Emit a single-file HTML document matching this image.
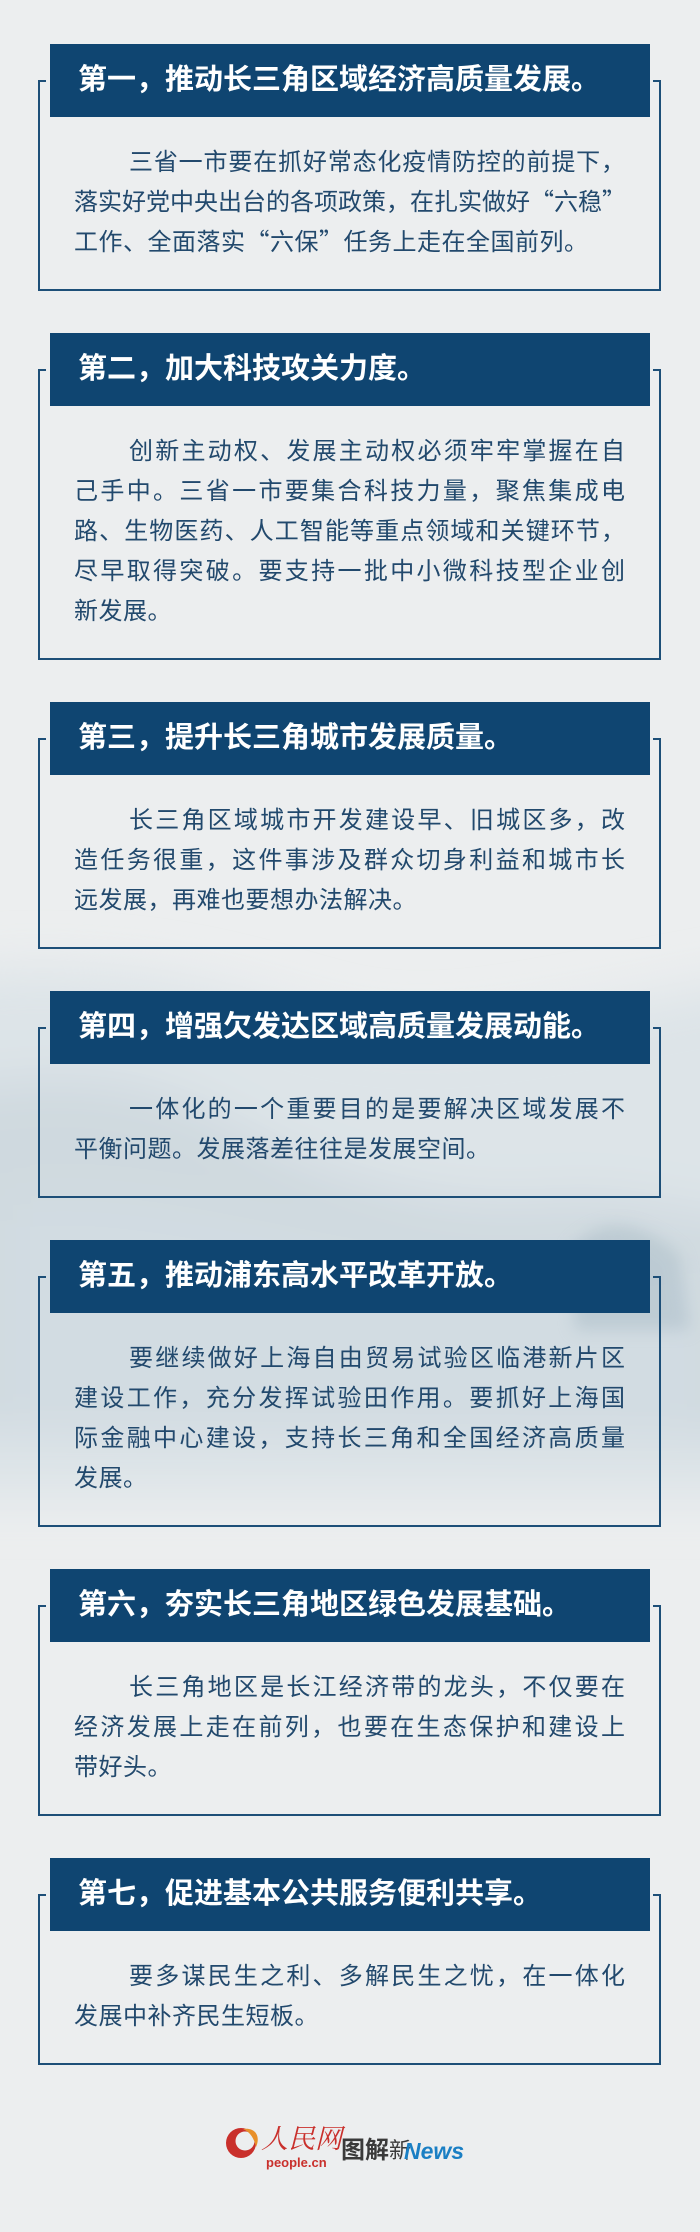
<!DOCTYPE html>
<html><head><meta charset="utf-8">
<style>
*{margin:0;padding:0;box-sizing:border-box}
html,body{width:700px;height:2232px;overflow:hidden}
body{position:relative;background:#eceeef;font-family:"Liberation Sans","Noto Sans CJK SC",sans-serif}
.bg{position:absolute;left:0;top:0;width:700px;height:2232px}
.box{position:absolute;left:38px;width:623px;border:2px solid #1d4f78;border-top:none}
.box:before,.box:after{content:"";position:absolute;top:0;width:8px;border-top:2px solid #1d4f78}
.box:before{left:-2px}.box:after{right:-2px}
.hd{position:absolute;left:50px;width:600px;height:73px;background:#0f4571;color:#fff;font-weight:bold;font-size:29px;line-height:73px;padding-left:28px;white-space:nowrap}
.tx{position:absolute;left:74px;width:551px;color:#22496d;font-size:24px;line-height:40px;font-family:"Noto Sans CJK SC",sans-serif}
.tx div{text-align:justify;text-align-last:justify;white-space:nowrap;height:40px}
.tx div.l{text-align-last:left;letter-spacing:0.5px}
.tx div.i{padding-left:55px}
</style></head><body>
<svg class="bg" width="700" height="2232" viewBox="0 0 700 2232">
<defs>
<filter id="b" x="-50%" y="-50%" width="200%" height="200%"><feGaussianBlur stdDeviation="25"/></filter>
<filter id="b2" x="-50%" y="-50%" width="200%" height="200%"><feGaussianBlur stdDeviation="8"/></filter>
</defs>
<g filter="url(#b)">
<path d="M-100 980 C120 950 220 990 330 1020 C450 1050 560 1010 800 970 L800 1500 L-100 1500Z" fill="#dde4e8"/>
<path d="M-100 1100 C80 1060 160 1080 260 1140 C360 1190 470 1210 560 1200 C620 1195 660 1210 800 1230 L800 1440 L-100 1430Z" fill="#cfd9df"/>
<path d="M0 1200 C100 1180 250 1220 380 1245 C500 1270 600 1260 700 1250 L700 1420 L0 1410Z" fill="#d2dce2"/>
</g>
<g filter="url(#b2)" opacity="0.5">
<path d="M570 1250 C600 1215 640 1220 680 1255 L690 1330 L575 1330Z" fill="#a9bbc6"/>
</g>
</svg>

<div class="box" style="top:80px;height:211px"></div>
<div class="hd" style="top:44px">第一，推动长三角区域经济高质量发展。</div>
<div class="tx" style="top:140px"><div class="i">三省一市要在抓好常态化疫情防控的前提下，</div><div>落实好党中央出台的各项政策，在扎实做好“六稳”</div><div class="l">工作、全面落实“六保”任务上走在全国前列。</div></div>

<div class="box" style="top:369px;height:291px"></div>
<div class="hd" style="top:333px">第二，加大科技攻关力度。</div>
<div class="tx" style="top:429px"><div class="i">创新主动权、发展主动权必须牢牢掌握在自</div><div>己手中。三省一市要集合科技力量，聚焦集成电</div><div>路、生物医药、人工智能等重点领域和关键环节，</div><div>尽早取得突破。要支持一批中小微科技型企业创</div><div class="l">新发展。</div></div>

<div class="box" style="top:738px;height:211px"></div>
<div class="hd" style="top:702px">第三，提升长三角城市发展质量。</div>
<div class="tx" style="top:798px"><div class="i">长三角区域城市开发建设早、旧城区多，改</div><div>造任务很重，这件事涉及群众切身利益和城市长</div><div class="l">远发展，再难也要想办法解决。</div></div>

<div class="box" style="top:1027px;height:171px"></div>
<div class="hd" style="top:991px">第四，增强欠发达区域高质量发展动能。</div>
<div class="tx" style="top:1087px"><div class="i">一体化的一个重要目的是要解决区域发展不</div><div class="l">平衡问题。发展落差往往是发展空间。</div></div>

<div class="box" style="top:1276px;height:251px"></div>
<div class="hd" style="top:1240px">第五，推动浦东高水平改革开放。</div>
<div class="tx" style="top:1336px"><div class="i">要继续做好上海自由贸易试验区临港新片区</div><div>建设工作，充分发挥试验田作用。要抓好上海国</div><div>际金融中心建设，支持长三角和全国经济高质量</div><div class="l">发展。</div></div>

<div class="box" style="top:1605px;height:211px"></div>
<div class="hd" style="top:1569px">第六，夯实长三角地区绿色发展基础。</div>
<div class="tx" style="top:1665px"><div class="i">长三角地区是长江经济带的龙头，不仅要在</div><div>经济发展上走在前列，也要在生态保护和建设上</div><div class="l">带好头。</div></div>

<div class="box" style="top:1894px;height:171px"></div>
<div class="hd" style="top:1858px">第七，促进基本公共服务便利共享。</div>
<div class="tx" style="top:1954px"><div class="i">要多谋民生之利、多解民生之忧，在一体化</div><div class="l">发展中补齐民生短板。</div></div>

<svg style="position:absolute;left:224px;top:2118px" width="240" height="52" viewBox="0 0 240 52">
<circle cx="17" cy="25" r="15" fill="#c9302c"/>
<circle cx="21" cy="23" r="9.5" fill="#eceeef"/>
<path d="M19 11 C31 9 37 18 32 29 C30 20 26 14 19 11Z" fill="#e8902a"/>
<text x="37" y="30" font-family="Noto Serif CJK SC,serif" font-style="italic" font-size="27" fill="#c9302c">人民网</text>
<text x="42" y="49" font-family="Liberation Sans,sans-serif" font-size="13" font-weight="bold" fill="#c9302c">people.cn</text>
<text x="117" y="40" font-family="Noto Sans CJK SC,sans-serif" font-weight="bold" font-size="24" fill="#3a3a3a">图解</text>
<text x="165" y="40" font-family="Noto Sans CJK SC,sans-serif" font-size="22" fill="#3a3a3a">新</text>
<text x="180" y="41" font-family="Liberation Sans,sans-serif" font-weight="bold" font-style="italic" font-size="23" fill="#1a7fc4">News</text>
</svg>
</body></html>
